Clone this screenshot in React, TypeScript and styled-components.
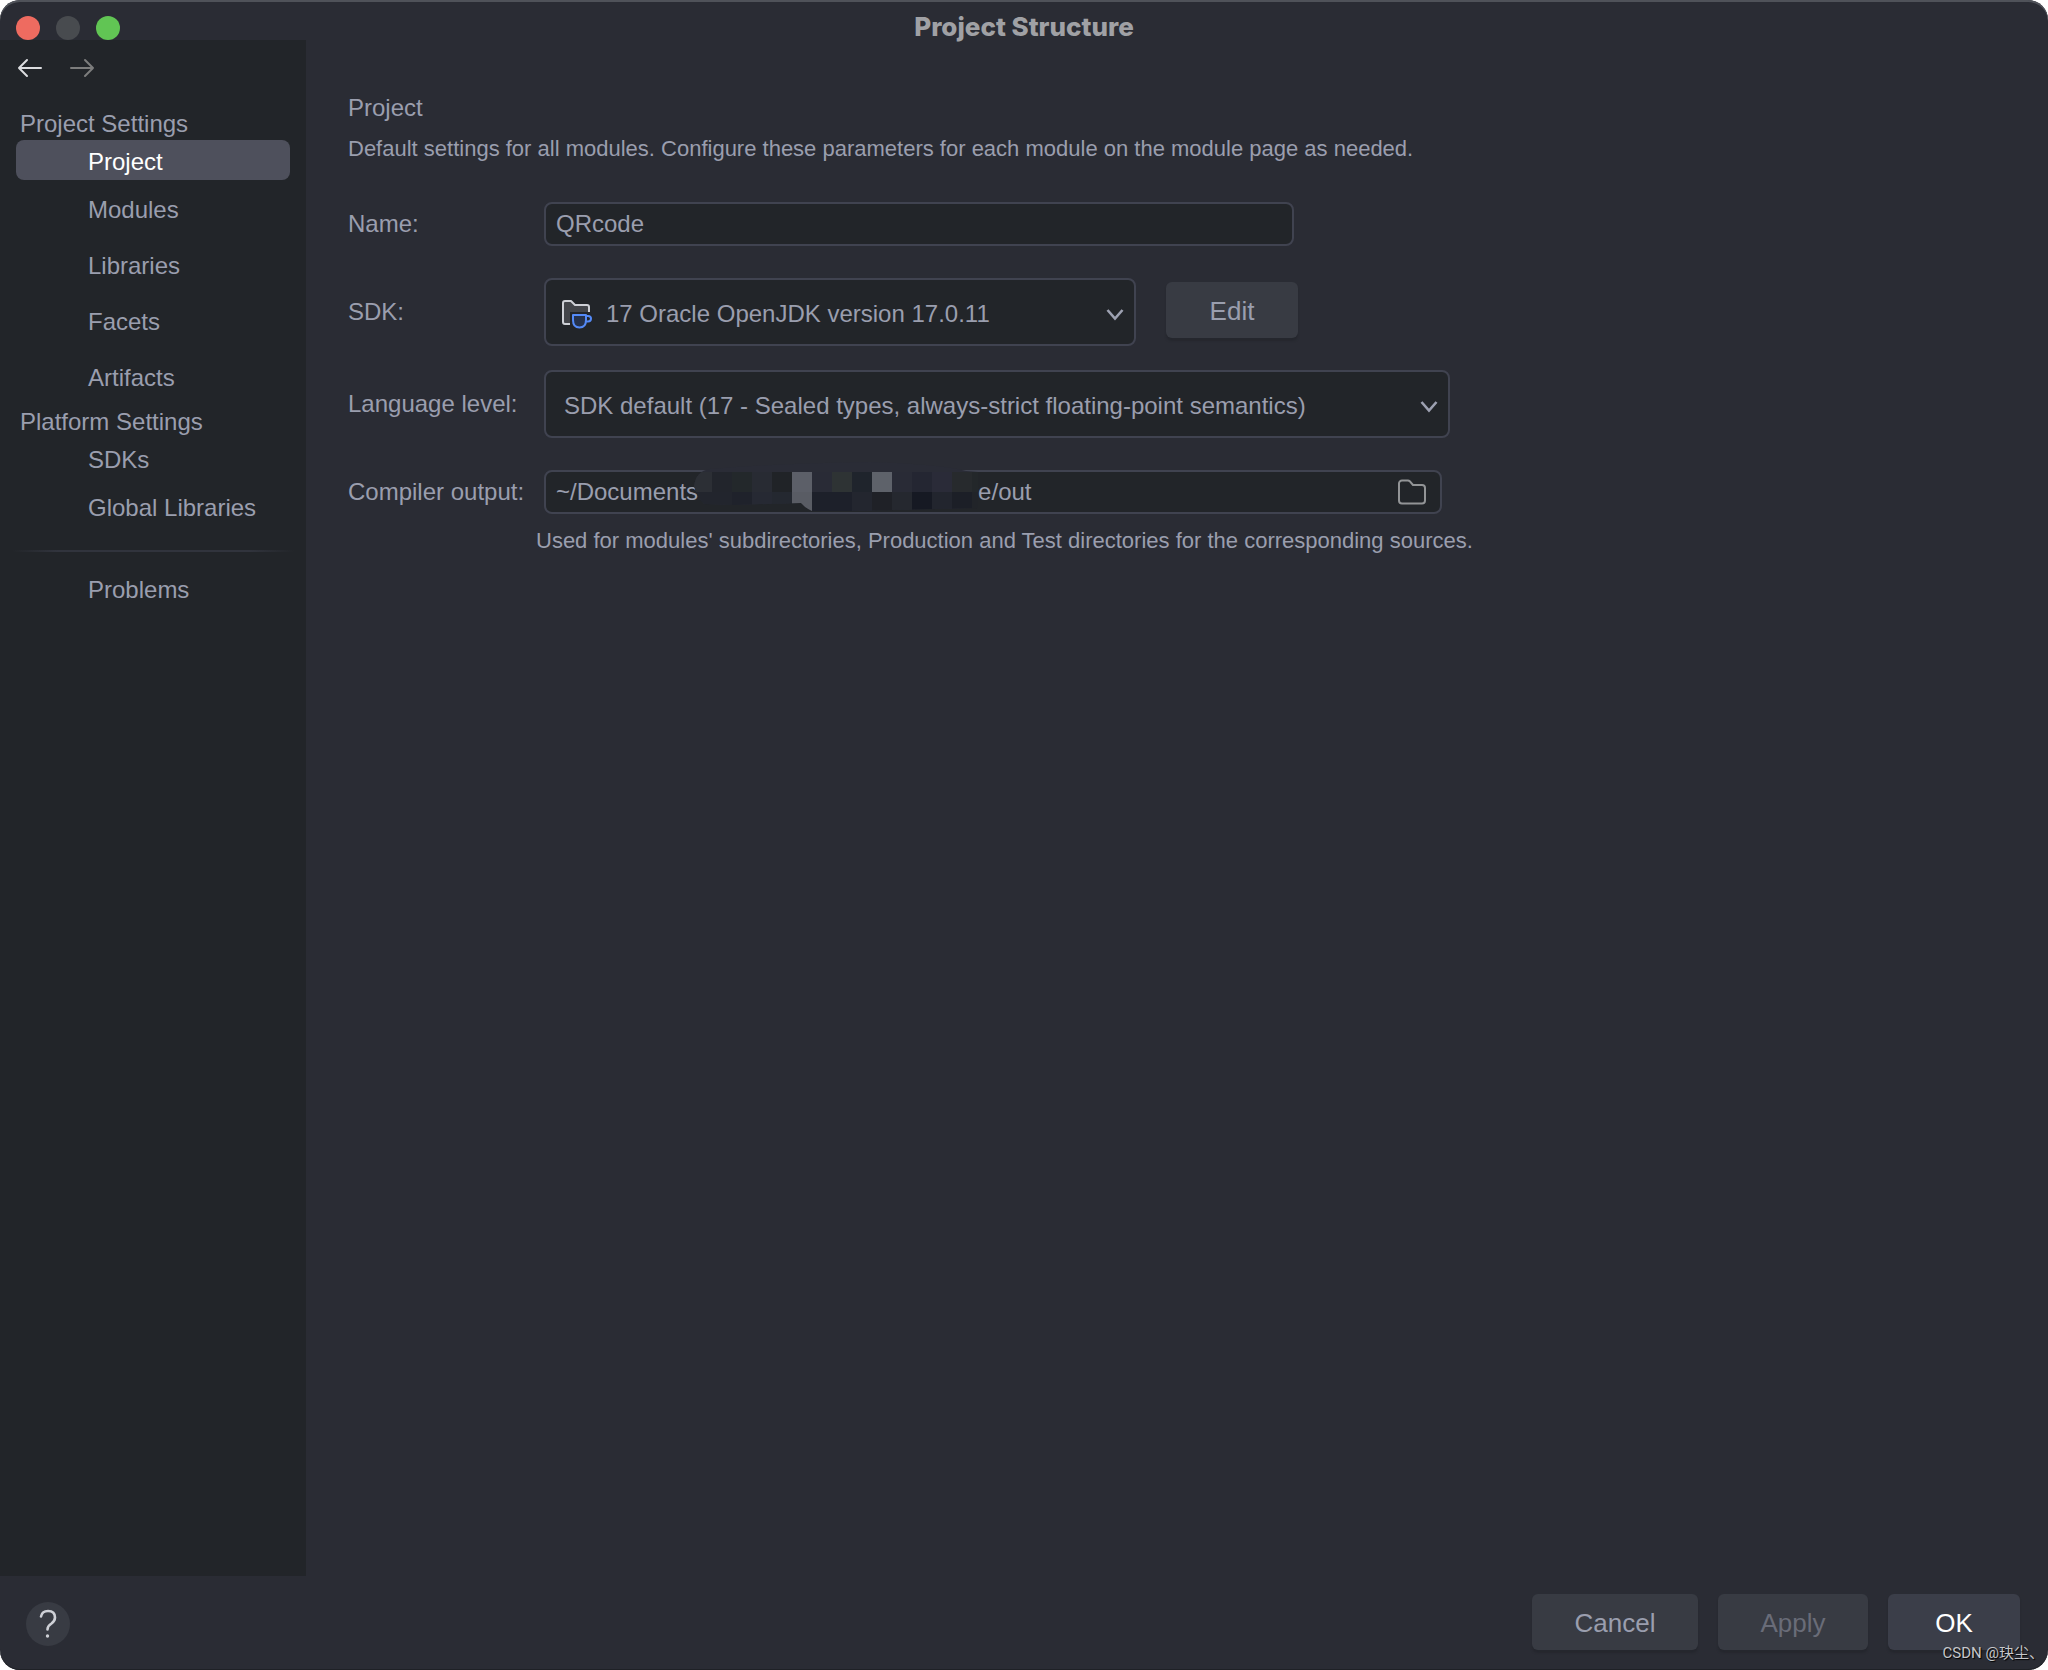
import React from "react";
import styled, { createGlobalStyle, css } from "styled-components";

const color = {
  window: "#2a2c34",
  panel: "#222529",
  border: "#404350",
  text: "#9a9eae",
  button: "#383b43",
  primary: "#3b3e49",
  selected: "#4e505c",
};

const GlobalStyle = createGlobalStyle`
  *, *::before, *::after { box-sizing: border-box; }
  body {
    margin: 0;
    background: #ffffff;
    font-family: "Liberation Sans", Arial, "Noto Sans CJK SC", sans-serif;
    font-size: 24px;
    line-height: 28px;
    color: ${color.text};
  }
  button, input, select { font: inherit; color: inherit; margin: 0; }
  svg { display: block; }
`;

const Window = styled.div`
  position: relative;
  display: flex;
  flex-direction: column;
  min-height: 100vh;
  overflow: hidden;
  border-radius: 20px;
  background: ${color.window};
  box-shadow: inset 0 2px #4f5259, inset 0 -1px #1f2126;
`;

const TitleBar = styled.header`
  display: grid;
  grid-template-columns: 1fr auto 1fr;
  align-items: end;
  height: 40px;
  padding: 0 16px;
`;

const Lights = styled.div`
  display: flex;
  gap: 16px;
`;

const Light = styled.button<{ $fill: string }>`
  width: 24px;
  height: 24px;
  padding: 0;
  border: 0;
  border-radius: 50%;
  background: ${(p) => p.$fill};
`;

const WindowTitle = styled.h1`
  margin: 0;
  font-family: Inter, sans-serif;
  font-size: 26px;
  font-weight: 800;
  line-height: 26px;
  color: #a0a1a5;
`;

const Body = styled.div`
  display: flex;
  flex: 1;
`;

const Sidebar = styled.aside`
  flex: none;
  width: 306px;
  background: ${color.panel};
`;

const History = styled.div`
  display: flex;
  gap: 24px;
  padding: 14px 16px 26px;
`;

const IconButton = styled.button`
  display: block;
  padding: 0;
  border: 0;
  background: none;
`;

const GroupTitle = styled.h2`
  margin: 0;
  padding-left: 20px;
  font-size: 24px;
  font-weight: 400;
  line-height: 32px;
`;

const NavList = styled.ul`
  margin: 0;
  padding: 0 16px;
  list-style: none;
`;

const NavLink = styled.a<{ $lead?: boolean; $selected?: boolean }>`
  display: flex;
  align-items: center;
  height: 56px;
  padding-left: 72px;
  border-radius: 8px;
  color: inherit;
  text-decoration: none;
  ${(p) =>
    p.$lead &&
    css`
      height: 40px;
      margin-bottom: 2px;
      padding-top: 4px;
    `}
  ${(p) =>
    p.$selected &&
    css`
      background: ${color.selected};
      color: #ffffff;
    `}
`;

const Divider = styled.hr`
  height: 2px;
  margin: 14px 12px 10px;
  border: 0;
  background: linear-gradient(to right, transparent, #31343d 16%, #31343d 84%, transparent);
`;

const Main = styled.main`
  flex: 1;
  min-width: 0;
  padding: 54px 42px 40px;
`;

const Heading = styled.h2`
  margin: 0 0 12px;
  font-size: 24px;
  font-weight: 400;
`;

const Description = styled.p`
  margin: 0;
  font-size: 22px;
  line-height: 30px;
`;

const Form = styled.form`
  display: flex;
  flex-direction: column;
  gap: 24px;
  margin-top: 30px;
`;

const Row = styled.div<{ $compact?: boolean }>`
  display: grid;
  grid-template-columns: 196px minmax(0, 1fr);
  align-items: center;
  margin: ${(p) => (p.$compact ? "8px 0" : "0")};
`;

const Controls = styled.div`
  display: flex;
  align-items: center;
  gap: 30px;
`;

const fieldBox = css`
  border: 2px solid ${color.border};
  border-radius: 8px;
  background: ${color.panel};
  outline: 0;
`;

const TextInput = styled.input`
  ${fieldBox}
  width: 100%;
  max-width: 750px;
  height: 44px;
  padding: 0 10px;
`;

const SelectBox = styled.div<{ $max: number }>`
  display: grid;
  align-items: center;
  width: 100%;
  max-width: ${(p) => p.$max}px;

  > * {
    grid-area: 1 / 1;
  }
`;

const Select = styled.select<{ $icon?: boolean }>`
  ${fieldBox}
  appearance: none;
  width: 100%;
  height: 68px;
  padding: 4px 40px 0 ${(p) => (p.$icon ? 60 : 18)}px;
`;

const Lead = styled.span`
  z-index: 1;
  margin: 4px 0 0 16px;
  pointer-events: none;
`;

const Trail = styled.span`
  z-index: 1;
  justify-self: end;
  margin: 6px 12px 0 0;
  pointer-events: none;
`;

const PathField = styled.div`
  ${fieldBox}
  position: relative;
  display: flex;
  align-items: center;
  width: 100%;
  max-width: 898px;
  height: 44px;
  padding: 0 14px 0 10px;
`;

const PathInput = styled.input`
  flex: 1;
  min-width: 0;
  padding: 0;
  border: 0;
  outline: 0;
  background: none;
`;

const Mask = styled.svg`
  position: absolute;
  left: 148px;
  top: -10px;
`;

const Hint = styled.p`
  margin: -20px 0 0 188px;
  font-size: 22px;
  line-height: 30px;
`;

const Button = styled.button<{ $width: number; $primary?: boolean }>`
  flex: none;
  width: ${(p) => p.$width}px;
  height: 56px;
  padding: 2px 0 0;
  border: 0;
  border-radius: 6px;
  background: ${(p) => (p.$primary ? color.primary : color.button)};
  box-shadow: 0 3px 2px #25272e;
  font-size: 26px;
  color: ${(p) => (p.$primary ? "#ffffff" : color.text)};

  &:disabled {
    color: #696c78;
  }
`;

const EditButton = styled(Button)`
  margin-bottom: 4px;
`;

const Footer = styled.footer`
  display: flex;
  align-items: center;
  justify-content: space-between;
  height: 94px;
  padding: 0 28px 2px 26px;
`;

const HelpButton = styled(IconButton)`
  display: grid;
  place-items: center;
  width: 44px;
  height: 44px;
  margin-top: 4px;
  border-radius: 50%;
  background: ${color.button};
`;

const Actions = styled.div`
  display: flex;
  gap: 20px;
`;

const Watermark = styled.span`
  position: absolute;
  right: 4px;
  bottom: 7px;
  font-family: Roboto, "Noto Sans CJK SC", sans-serif;
  font-size: 15px;
  line-height: 20px;
  color: #c6c7ca;
  text-shadow: 1px 1px 1px #000000;
`;

function Arrow({ forward }: { forward?: boolean }) {
  return (
    <svg width="28" height="28" viewBox="0 0 28 28" fill="none" stroke={forward ? "#7d7d7d" : "#dcdde0"} strokeWidth="2" strokeLinecap="round" strokeLinejoin="round">
      <path d={forward ? "M3 14H25M17 6L25 14L17 22" : "M25 14H3M11 6L3 14L11 22"} />
    </svg>
  );
}

function Chevron() {
  return (
    <svg width="18" height="12" viewBox="0 0 18 12" fill="none" stroke="#9da1b1" strokeWidth="2.600">
      <path d="M1.500 1L9 9.500L16.500 1" />
    </svg>
  );
}

function FolderIcon() {
  return (
    <svg width="28" height="26" viewBox="0 0 28 26" fill="none" stroke="#929496" strokeWidth="2" strokeLinejoin="round">
      <path d="M1 4.5A3 3 0 0 1 4 1.5H10Q11 1.5 11.7 2.2L15 6H24A3 3 0 0 1 27 9V21.500A3 3 0 0 1 24 24.500H4A3 3 0 0 1 1 21.500Z" />
    </svg>
  );
}

function SdkIcon() {
  return (
    <svg width="32" height="30" viewBox="0 0 32 30" fill="none" strokeWidth="2" strokeLinejoin="round">
      <path d="M3 4A2 2 0 0 1 5 2H11L15 6H27A2 2 0 0 1 29 8V13H10V25H5A2 2 0 0 1 3 23Z" fill="#43454a" />
      <path d="M10 25H5A2 2 0 0 1 3 23V4A2 2 0 0 1 5 2H11L15 6H27A2 2 0 0 1 29 8V13" stroke="#ced0d6" />
      <path d="M13 16H26V21Q26 28.500 19.500 28.500Q13 28.500 13 21Z" fill="#25324d" stroke="#548af7" />
      <path d="M26 17H28Q31 17 31 19.500Q31 22.500 28 22.500H26" stroke="#548af7" />
    </svg>
  );
}

const maskRows = [
  ["#2c2f35", "#22252c", "#23282b", "#282b33", "#202327", "#5c5f68", "#292b36", "#2e3334", "#1f242c", "#5e626a", "#292b36", "#242632", "#2a2b38", "#272a2d", "#23272a"],
  ["#22252d", "#22252d", "#1f222b", "#262933", "#242830", "#595c64", "#1d202a", "#1d202a", "#23262f", "#1f2127", "#25282f", "#161923", "#22252e", "#1c1f27", "#212429"],
];

function PathMask() {
  return (
    <Mask width="288" height="50" viewBox="0 0 288 50" aria-hidden="true">
      <clipPath id="brush">
        <path d="M0 24Q2 9 16 7Q90 1 176 0Q245 2 272 9L284 10V46L158 49H118Q111 46 107 41L40 43L10 42Q3 35 0 24Z" />
      </clipPath>
      <g clipPath="url(#brush)">
        <rect width="288" height="50" fill="#2a2c36" />
        {maskRows.map((row, r) =>
          row.map((fill, c) => (
            <rect key={`${r}-${c}`} x={c * 20 - 2} y={r ? 30 : 10} width={c === 14 ? 8 : 20} height="20" fill={fill} />
          ))
        )}
      </g>
    </Mask>
  );
}

const outputPath = `~/Documents${"\u00a0".repeat(42)}e/out`;

export default function App() {
  return (
    <Window>
      <GlobalStyle />
      <TitleBar>
        <Lights>
          <Light $fill="#ee6b60" aria-label="Close" />
          <Light $fill="#484b4f" aria-label="Minimize" />
          <Light $fill="#61c554" aria-label="Zoom" />
        </Lights>
        <WindowTitle>Project Structure</WindowTitle>
      </TitleBar>
      <Body>
        <Sidebar>
          <History>
            <IconButton aria-label="Back"><Arrow /></IconButton>
            <IconButton aria-label="Forward" disabled><Arrow forward /></IconButton>
          </History>
          <nav>
            <GroupTitle>Project Settings</GroupTitle>
            <NavList>
              <li><NavLink href="#project" $lead $selected aria-current="page">Project</NavLink></li>
              <li><NavLink href="#modules">Modules</NavLink></li>
              <li><NavLink href="#libraries">Libraries</NavLink></li>
              <li><NavLink href="#facets">Facets</NavLink></li>
              <li><NavLink href="#artifacts">Artifacts</NavLink></li>
            </NavList>
            <GroupTitle>Platform Settings</GroupTitle>
            <NavList>
              <li><NavLink href="#sdks" $lead>SDKs</NavLink></li>
              <li><NavLink href="#global-libraries">Global Libraries</NavLink></li>
            </NavList>
            <Divider />
            <NavList>
              <li><NavLink href="#problems">Problems</NavLink></li>
            </NavList>
          </nav>
        </Sidebar>
        <Main>
          <Heading>Project</Heading>
          <Description>
            Default settings for all modules. Configure these parameters for each module on the module page as needed.
          </Description>
          <Form onSubmit={(e) => e.preventDefault()}>
            <Row $compact>
              <label htmlFor="name">Name:</label>
              <TextInput id="name" type="text" defaultValue="QRcode" />
            </Row>
            <Row>
              <label htmlFor="sdk">SDK:</label>
              <Controls>
                <SelectBox $max={592}>
                  <Select id="sdk" $icon>
                    <option>17 Oracle OpenJDK version 17.0.11</option>
                  </Select>
                  <Lead><SdkIcon /></Lead>
                  <Trail><Chevron /></Trail>
                </SelectBox>
                <EditButton type="button" $width={132}>Edit</EditButton>
              </Controls>
            </Row>
            <Row>
              <label htmlFor="level">Language level:</label>
              <SelectBox $max={906}>
                <Select id="level">
                  <option>SDK default (17 - Sealed types, always-strict floating-point semantics)</option>
                </Select>
                <Trail><Chevron /></Trail>
              </SelectBox>
            </Row>
            <Row $compact>
              <label htmlFor="output">Compiler output:</label>
              <PathField>
                <PathInput id="output" type="text" defaultValue={outputPath} />
                <PathMask />
                <IconButton type="button" aria-label="Browse"><FolderIcon /></IconButton>
              </PathField>
            </Row>
            <Hint>Used for modules' subdirectories, Production and Test directories for the corresponding sources.</Hint>
          </Form>
        </Main>
      </Body>
      <Footer>
        <HelpButton aria-label="Help">
          <svg width="20" height="30" viewBox="0 0 20 30" fill="none" stroke="#ced0d6" strokeWidth="2.600" strokeLinecap="round" strokeLinejoin="round">
            <path d="M3 7.500Q4 2 10 2Q17 2 17 8.500Q17 12 13.500 14.500Q9.500 17 9.500 20.500" />
            <circle cx="9.500" cy="27" r="1.700" fill="#ced0d6" stroke="none" />
          </svg>
        </HelpButton>
        <Actions>
          <Button type="button" $width={166}>Cancel</Button>
          <Button type="button" $width={150} disabled>Apply</Button>
          <Button type="button" $width={132} $primary>OK</Button>
        </Actions>
      </Footer>
      <Watermark>CSDN @玦尘、</Watermark>
    </Window>
  );
}
